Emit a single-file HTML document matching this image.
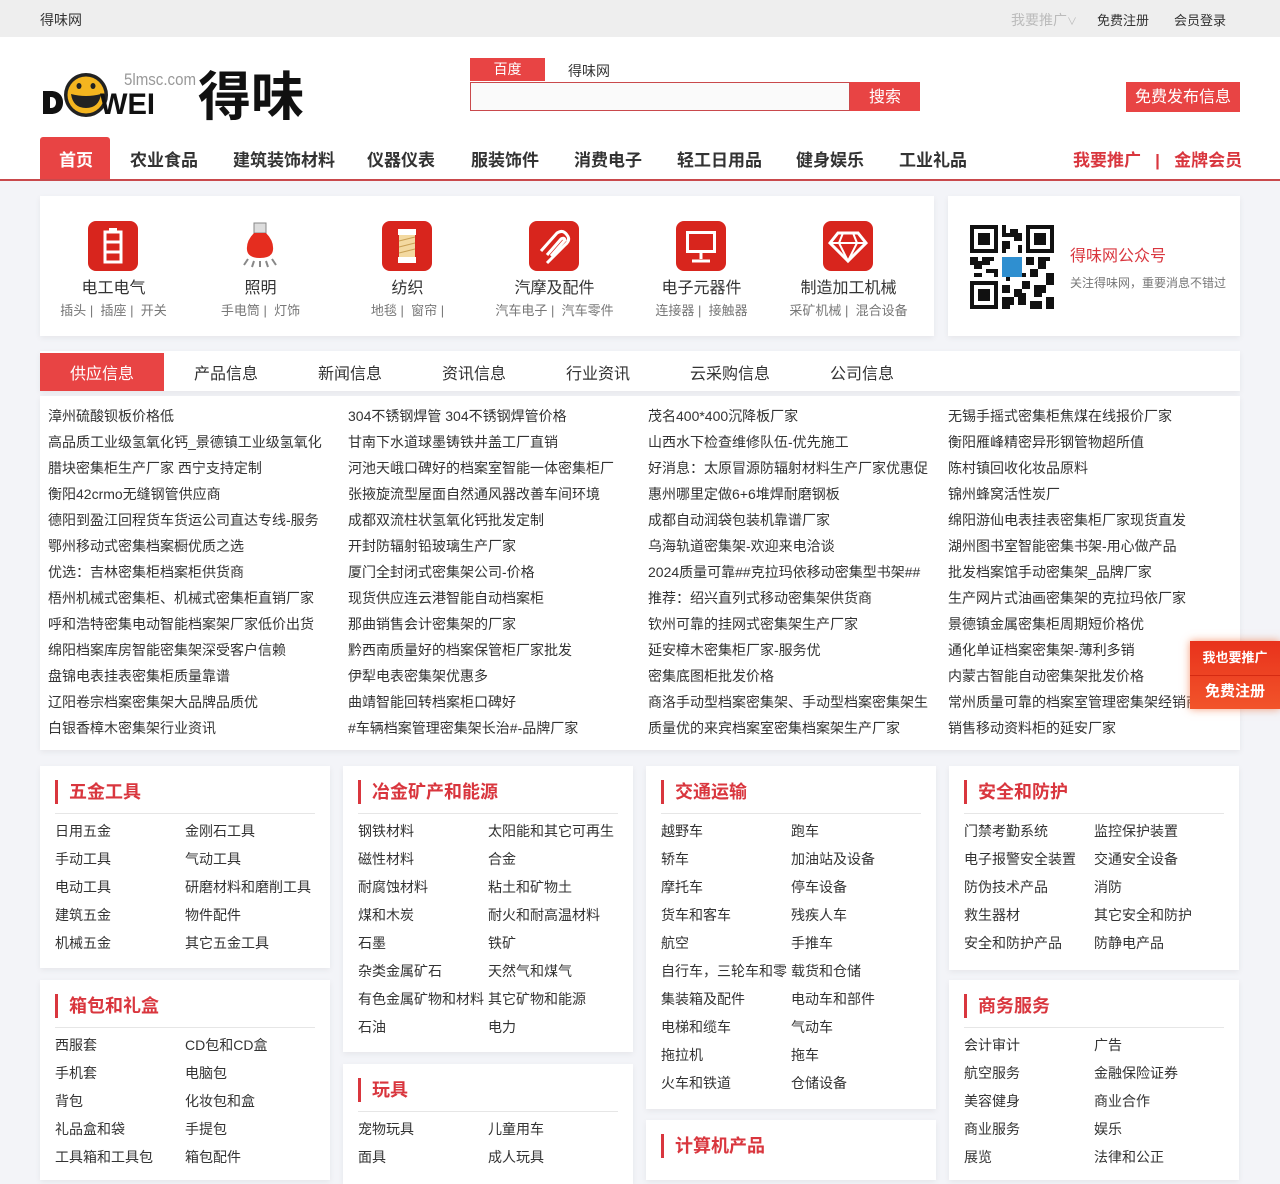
<!DOCTYPE html>
<html><head><meta charset="utf-8">
<style>
*{margin:0;padding:0;box-sizing:border-box}
body{width:1280px;height:1167px;overflow:hidden;background:#f3f4f8;font-family:"Liberation Sans","Noto Sans CJK SC",sans-serif;color:#333;position:relative}
.a{position:absolute;white-space:nowrap}
.top{position:absolute;left:0;top:0;width:1280px;height:37px;background:#eee;font-size:14px}
.hdr{position:absolute;left:0;top:37px;width:1280px;height:144px;background:#fff;border-bottom:2px solid #c9494c}
.nav{font-size:17px;font-weight:bold;color:#333}
.box{position:absolute;background:#fff;box-shadow:0 2px 6px rgba(0,0,0,.06)}
.ic{position:absolute;top:25px;width:50px;height:50px;border-radius:8px;background:#d8251d}
.it{position:absolute;top:78px;width:147px;text-align:center;font-size:16px;color:#333}
.is{position:absolute;top:104px;width:147px;text-align:center;font-size:13px;color:#777}
.lst{position:absolute;font-size:14px;line-height:26px;color:#333;white-space:nowrap;overflow:hidden}
.card{position:absolute;width:290px;background:#fff;box-shadow:0 2px 6px rgba(0,0,0,.06)}
.card h3{position:absolute;left:15px;top:14px;height:24px;border-left:3px solid #d9363e;padding-left:11px;font-size:18px;line-height:24px;color:#d9363e;font-weight:bold}
.card .sep{position:absolute;left:15px;top:47px;width:260px;height:1px;background:#e6e6e6}
.card ul{position:absolute;left:15px;top:51px;width:270px;list-style:none;font-size:14px;line-height:28px}
.card li{float:left;width:130px;white-space:nowrap;overflow:hidden}
</style></head><body>
<div class="top">
<span class="a" style="left:40px;top:10px">得味网</span>
<span class="a" style="left:1011px;top:10px;color:#bbb">我要推广<span style="font-size:10px">&#8744;</span></span>
<span class="a" style="left:1097px;top:10px;font-size:13px">免费注册</span>
<span class="a" style="left:1174px;top:10px;font-size:13px">会员登录</span>
</div>
<div class="hdr">
<svg class="a" style="left:40px;top:18px" width="275" height="70" viewBox="0 0 275 70">
<path d="M3 36h8c8 0 12 5 12 11.5s-4 11.5-12 11.5H3z M10 42v11h1c3 0 5-2 5-5.5s-2-5.5-5-5.5z" fill="#111"/>
<circle cx="46" cy="40" r="22" fill="#222"/><circle cx="46" cy="40" r="18.5" fill="#f4b51f"/>
<ellipse cx="39" cy="31" rx="2.5" ry="3" fill="#222"/><ellipse cx="53" cy="31" rx="2.5" ry="3" fill="#222"/>
<path d="M31 39q15 4 30 0q-2 14-15 14q-13 0-15-14z" fill="#222"/>
<text x="60" y="59" font-family="Liberation Sans" font-weight="bold" font-size="30" fill="#111" textLength="55" lengthAdjust="spacingAndGlyphs">WEI</text>
<text x="84" y="30" font-family="Liberation Sans" font-size="17" fill="#999" textLength="72" lengthAdjust="spacingAndGlyphs">5lmsc.com</text>
<text x="158" y="60" font-family="Noto Sans CJK SC" font-weight="bold" font-size="53" fill="#111">得味</text>
</svg>
<div class="a" style="left:470px;top:21px;width:75px;height:23px;background:#e84444;color:#fff;font-size:14px;text-align:center;line-height:23px">百度</div>
<span class="a" style="left:568px;top:24px;font-size:14px">得味网</span>
<div class="a" style="left:470px;top:45px;width:380px;height:29px;border:1px solid #c9494c;background:#fafafa"></div>
<div class="a" style="left:850px;top:45px;width:70px;height:29px;background:#e84444;color:#fff;font-size:16px;text-align:center;line-height:31px">搜索</div>
<div class="a" style="left:1126px;top:45px;width:114px;height:30px;background:#e84444;color:#fff;font-size:16px;text-align:center;line-height:32px">免费发布信息</div>
<div class="a" style="left:40px;top:100px;width:70px;height:42px;background:#e84444;border-radius:3px 3px 0 0"></div>
<span class="a nav" style="left:59px;top:109px;color:#fff">首页</span>
<span class="a nav" style="left:130px;top:109px">农业食品</span>
<span class="a nav" style="left:233px;top:109px">建筑装饰材料</span>
<span class="a nav" style="left:367px;top:109px">仪器仪表</span>
<span class="a nav" style="left:471px;top:109px">服装饰件</span>
<span class="a nav" style="left:574px;top:109px">消费电子</span>
<span class="a nav" style="left:677px;top:109px">轻工日用品</span>
<span class="a nav" style="left:796px;top:109px">健身娱乐</span>
<span class="a nav" style="left:899px;top:109px">工业礼品</span>
<span class="a nav" style="left:1073px;top:109px;color:#d9363e">我要推广 &nbsp;&nbsp;| &nbsp;&nbsp;金牌会员</span>
</div>

<div class="box" style="left:40px;top:196px;width:894px;height:140px">
<div class="ic" style="left:48px"><svg width="50" height="50"><rect x="17" y="11" width="16" height="30" fill="none" stroke="#fff" stroke-width="3"/><rect x="21" y="7" width="8" height="4" fill="#fff"/><path d="M17 21h16M17 31h16" stroke="#fff" stroke-width="3"/></svg></div>
<div class="ic" style="left:195px;background:none"><svg width="50" height="50"><rect x="19" y="2" width="12" height="10" fill="#ddd" stroke="#888"/><path d="M19 12q-8 8-7 17q1 8 13 8q12 0 13-8q1-9-7-17z" fill="#e52d1f"/><path d="M13 38l-4 6M19 40l-2 6M25 40v6M31 40l2 6M37 38l4 6" stroke="#888" stroke-width="2"/></svg></div>
<div class="ic" style="left:342px"><svg width="50" height="50"><rect x="16" y="8" width="18" height="6" fill="#fff"/><rect x="16" y="36" width="18" height="6" fill="#fff"/><rect x="17" y="14" width="16" height="22" fill="#f3d9a0"/><path d="M17 20l16-4M17 26l16-4M17 32l16-4" stroke="#c9a055"/></svg></div>
<div class="ic" style="left:489px"><svg width="50" height="50"><path d="M12 30l16-18q6-4 10 2q4 5-2 10l-18 18M18 34l14-16q3-2 4 1l-14 16" fill="none" stroke="#fff" stroke-width="3"/></svg></div>
<div class="ic" style="left:636px"><svg width="50" height="50"><rect x="10" y="10" width="30" height="22" fill="#fff"/><rect x="13" y="13" width="24" height="16" fill="#d8251d"/><path d="M25 32v6M16 40h18" stroke="#fff" stroke-width="3"/></svg></div>
<div class="ic" style="left:783px"><svg width="50" height="50"><path d="M15 12h20l8 10-18 18-18-18z" fill="none" stroke="#fff" stroke-width="3"/><path d="M7 22h36M20 12l-4 10 9 18 9-18-4-10" fill="none" stroke="#fff" stroke-width="2"/></svg></div>
<div class="it" style="left:0">电工电气</div><div class="is" style="left:0">插头 |&nbsp; 插座 |&nbsp; 开关</div>
<div class="it" style="left:147px">照明</div><div class="is" style="left:147px">手电筒 |&nbsp; 灯饰</div>
<div class="it" style="left:294px">纺织</div><div class="is" style="left:294px">地毯 |&nbsp; 窗帘 |</div>
<div class="it" style="left:441px">汽摩及配件</div><div class="is" style="left:441px">汽车电子 |&nbsp; 汽车零件</div>
<div class="it" style="left:588px">电子元器件</div><div class="is" style="left:588px">连接器 |&nbsp; 接触器</div>
<div class="it" style="left:735px">制造加工机械</div><div class="is" style="left:735px">采矿机械 |&nbsp; 混合设备</div>
</div>
<div class="box" style="left:948px;top:196px;width:292px;height:140px">
<svg class="a" style="left:22px;top:29px" width="84" height="84" viewBox="0 0 21 21" shape-rendering="crispEdges">
<rect width="21" height="21" fill="#fff"/>
<path d="M0 0h7v7h-7zM14 0h7v7h-7zM0 14h7v7h-7z" fill="#111"/><path d="M1 1h5v5h-5zM15 1h5v5h-5zM1 15h5v5h-5z" fill="#fff"/><path d="M2 2h3v3h-3zM16 2h3v3h-3zM2 16h3v3h-3z" fill="#111"/>
<path d="M8 0h1v2h1v1h-2zM10 1h2v1h1v2h-2v-1h-1zM8 4h2v2h-1v1h-1zM12 5h1v2h-1zM0 8h2v1h1v2h-2v-1h-1zM3 8h3v1h-1v1h-2zM4 11h3v2h-1v-1h-2zM1 12h2v1h-2zM14 8h2v2h-2zM17 8h3v1h-1v2h-2zM15 11h2v2h-2zM19 12h2v3h-2zM13 14h2v2h-2zM16 15h3v2h-1v1h-2zM8 15h2v2h-2zM11 16h2v1h1v3h-2v-2h-1zM8 18h3v2h-1v1h-2zM15 19h3v2h-3zM19 18h2v3h-2zM9 13h1v1h-1zM13 12h1v1h-1z" fill="#111"/>
<rect x="8" y="8" width="5" height="5" fill="#2f8fd0"/>
</svg>
<span class="a" style="left:122px;top:46px;font-size:16px;color:#d9363e">得味网公众号</span>
<span class="a" style="left:122px;top:78px;font-size:12px;color:#777">关注得味网，重要消息不错过</span>
</div>

<div class="box" style="left:40px;top:351px;width:1200px;height:40px;font-size:16px">
<div class="a" style="left:0;top:2px;width:124px;height:38px;background:#e84444"></div>
<span class="a" style="left:30px;top:9px;color:#fff">供应信息</span>
<span class="a" style="left:154px;top:9px">产品信息</span>
<span class="a" style="left:278px;top:9px">新闻信息</span>
<span class="a" style="left:402px;top:9px">资讯信息</span>
<span class="a" style="left:526px;top:9px">行业资讯</span>
<span class="a" style="left:650px;top:9px">云采购信息</span>
<span class="a" style="left:790px;top:9px">公司信息</span>
</div>
<div class="box" style="left:40px;top:396px;width:1200px;height:354px"></div>
<div class="lst" style="left:48px;top:403px">漳州硫酸钡板价格低<br>高品质工业级氢氧化钙_景德镇工业级氢氧化<br>腊块密集柜生产厂家 西宁支持定制<br>衡阳42crmo无缝钢管供应商<br>德阳到盈江回程货车货运公司直达专线-服务<br>鄂州移动式密集档案橱优质之选<br>优选：吉林密集柜档案柜供货商<br>梧州机械式密集柜、机械式密集柜直销厂家<br>呼和浩特密集电动智能档案架厂家低价出货<br>绵阳档案库房智能密集架深受客户信赖<br>盘锦电表挂表密集柜质量靠谱<br>辽阳卷宗档案密集架大品牌品质优<br>白银香樟木密集架行业资讯</div>
<div class="lst" style="left:348px;top:403px">304不锈钢焊管 304不锈钢焊管价格<br>甘南下水道球墨铸铁井盖工厂直销<br>河池天峨口碑好的档案室智能一体密集柜厂<br>张掖旋流型屋面自然通风器改善车间环境<br>成都双流柱状氢氧化钙批发定制<br>开封防辐射铅玻璃生产厂家<br>厦门全封闭式密集架公司-价格<br>现货供应连云港智能自动档案柜<br>那曲销售会计密集架的厂家<br>黔西南质量好的档案保管柜厂家批发<br>伊犁电表密集架优惠多<br>曲靖智能回转档案柜口碑好<br>#车辆档案管理密集架长治#-品牌厂家</div>
<div class="lst" style="left:648px;top:403px">茂名400*400沉降板厂家<br>山西水下检查维修队伍-优先施工<br>好消息：太原冒源防辐射材料生产厂家优惠促<br>惠州哪里定做6+6堆焊耐磨钢板<br>成都自动润袋包装机靠谱厂家<br>乌海轨道密集架-欢迎来电洽谈<br>2024质量可靠##克拉玛依移动密集型书架##<br>推荐：绍兴直列式移动密集架供货商<br>钦州可靠的挂网式密集架生产厂家<br>延安樟木密集柜厂家-服务优<br>密集底图柜批发价格<br>商洛手动型档案密集架、手动型档案密集架生<br>质量优的来宾档案室密集档案架生产厂家</div>
<div class="lst" style="left:948px;top:403px;width:242px">无锡手摇式密集柜焦煤在线报价厂家<br>衡阳雁峰精密异形钢管物超所值<br>陈村镇回收化妆品原料<br>锦州蜂窝活性炭厂<br>绵阳游仙电表挂表密集柜厂家现货直发<br>湖州图书室智能密集书架-用心做产品<br>批发档案馆手动密集架_品牌厂家<br>生产网片式油画密集架的克拉玛依厂家<br>景德镇金属密集柜周期短价格优<br>通化单证档案密集架-薄利多销<br>内蒙古智能自动密集架批发价格<br>常州质量可靠的档案室管理密集架经销商<br>销售移动资料柜的延安厂家</div>
<div class="a" style="left:1190px;top:641px;width:90px;height:68px;background:linear-gradient(#e8321c,#f2542a);box-shadow:0 0 8px rgba(240,90,30,.6);color:#fff;font-weight:bold;text-align:center">
<div style="font-size:13px;line-height:34px;border-bottom:1px solid #d52a12">我也要推广</div>
<div style="font-size:15px;line-height:32px">免费注册</div></div>

<div class="card" style="left:40px;top:766px;height:202px"><h3>五金工具</h3><div class="sep"></div><ul><li>日用五金</li><li>金刚石工具</li><li>手动工具</li><li>气动工具</li><li>电动工具</li><li>研磨材料和磨削工具</li><li>建筑五金</li><li>物件配件</li><li>机械五金</li><li>其它五金工具</li></ul></div>
<div class="card" style="left:40px;top:980px;height:200px"><h3>箱包和礼盒</h3><div class="sep"></div><ul><li>西服套</li><li>CD包和CD盒</li><li>手机套</li><li>电脑包</li><li>背包</li><li>化妆包和盒</li><li>礼品盒和袋</li><li>手提包</li><li>工具箱和工具包</li><li>箱包配件</li></ul></div>
<div class="card" style="left:343px;top:766px;height:286px"><h3>冶金矿产和能源</h3><div class="sep"></div><ul><li>钢铁材料</li><li>太阳能和其它可再生</li><li>磁性材料</li><li>合金</li><li>耐腐蚀材料</li><li>粘土和矿物土</li><li>煤和木炭</li><li>耐火和耐高温材料</li><li>石墨</li><li>铁矿</li><li>杂类金属矿石</li><li>天然气和煤气</li><li>有色金属矿物和材料</li><li>其它矿物和能源</li><li>石油</li><li>电力</li></ul></div>
<div class="card" style="left:343px;top:1064px;height:120px"><h3>玩具</h3><div class="sep"></div><ul><li>宠物玩具</li><li>儿童用车</li><li>面具</li><li>成人玩具</li></ul></div>
<div class="card" style="left:646px;top:766px;height:343px"><h3>交通运输</h3><div class="sep"></div><ul><li>越野车</li><li>跑车</li><li>轿车</li><li>加油站及设备</li><li>摩托车</li><li>停车设备</li><li>货车和客车</li><li>残疾人车</li><li>航空</li><li>手推车</li><li>自行车，三轮车和零</li><li>载货和仓储</li><li>集装箱及配件</li><li>电动车和部件</li><li>电梯和缆车</li><li>气动车</li><li>拖拉机</li><li>拖车</li><li>火车和铁道</li><li>仓储设备</li></ul></div>
<div class="card" style="left:646px;top:1120px;height:60px"><h3>计算机产品</h3></div>
<div class="card" style="left:949px;top:766px;height:204px"><h3>安全和防护</h3><div class="sep"></div><ul><li>门禁考勤系统</li><li>监控保护装置</li><li>电子报警安全装置</li><li>交通安全设备</li><li>防伪技术产品</li><li>消防</li><li>救生器材</li><li>其它安全和防护</li><li>安全和防护产品</li><li>防静电产品</li></ul></div>
<div class="card" style="left:949px;top:980px;height:200px"><h3>商务服务</h3><div class="sep"></div><ul><li>会计审计</li><li>广告</li><li>航空服务</li><li>金融保险证券</li><li>美容健身</li><li>商业合作</li><li>商业服务</li><li>娱乐</li><li>展览</li><li>法律和公正</li></ul></div>
</body></html>
